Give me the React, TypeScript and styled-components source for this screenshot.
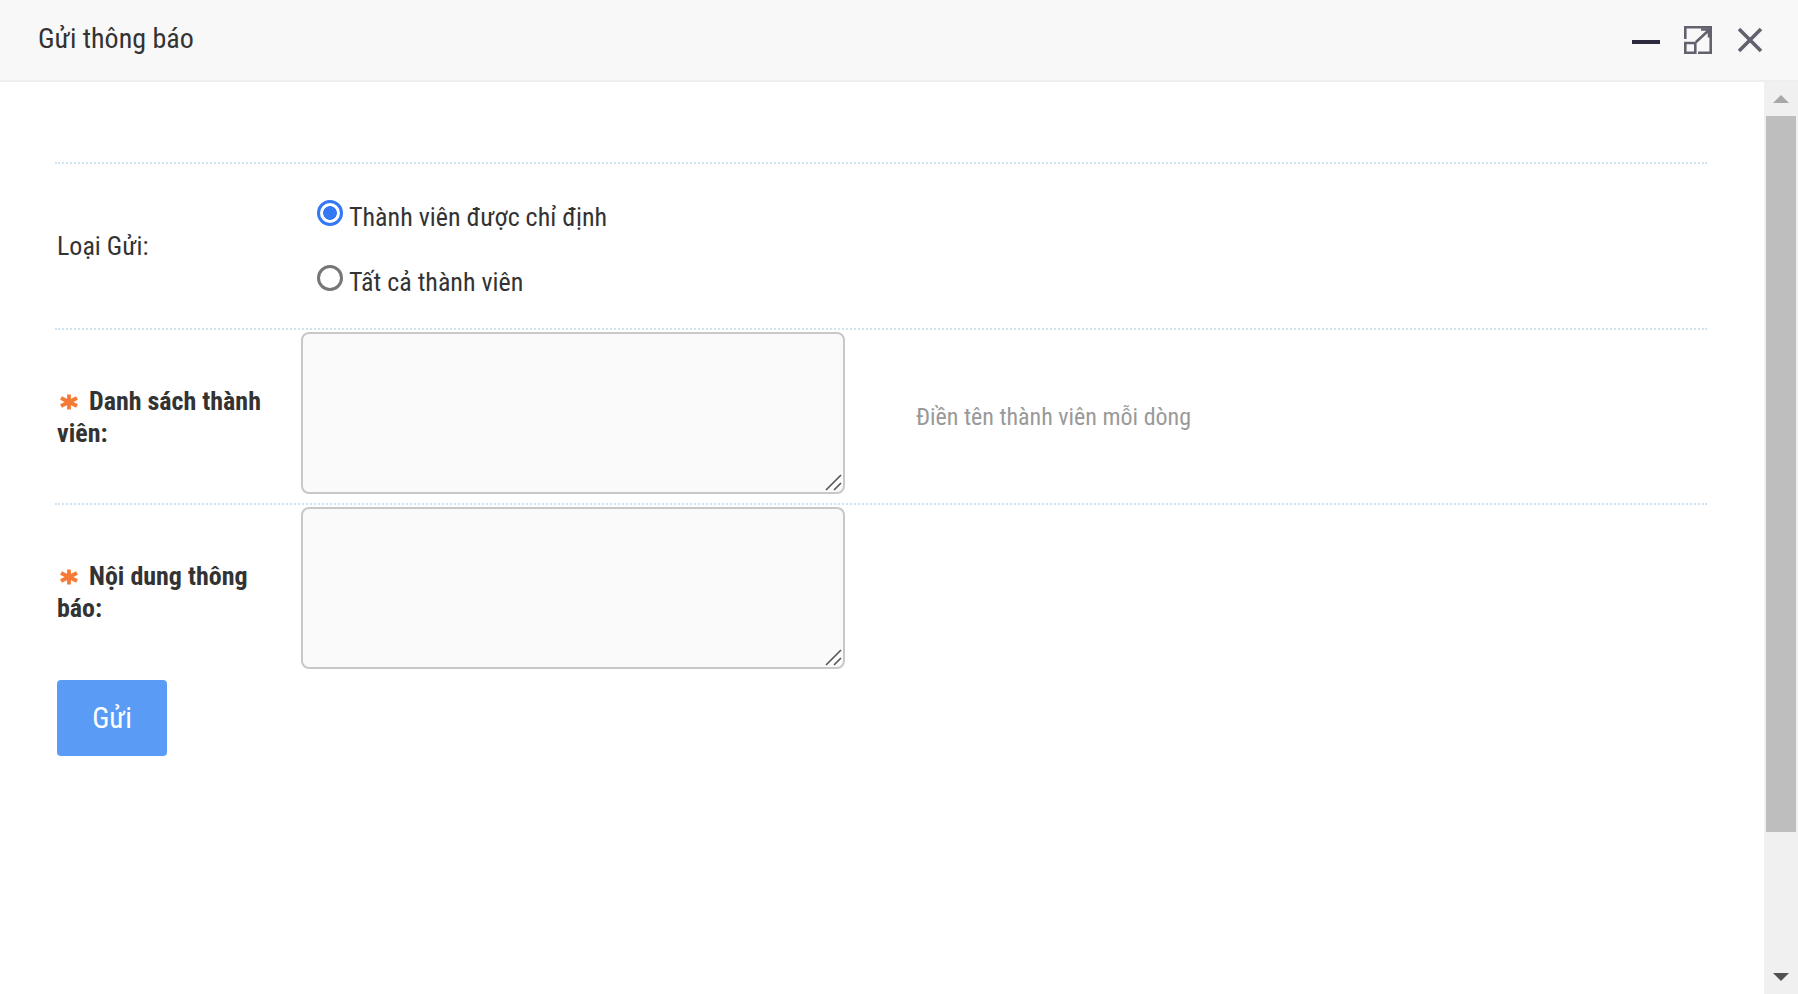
import { FC } from "react";
import styled, { createGlobalStyle } from "styled-components";

const GlobalStyle = createGlobalStyle`
  html, body {
    margin: 0;
    height: 100%;
    overflow: hidden;
    background: #fff;
  }
  #root {
    height: 100%;
  }
`;

const StyledWindow = styled.div`
  display: flex;
  flex-direction: column;
  height: 994px;
  font-family: "Roboto", "Liberation Sans", sans-serif;
  font-stretch: condensed;
  color: #333;
`;
const StyledHeader = styled.header`
  flex: none;
  box-sizing: border-box;
  height: 82px;
  display: flex;
  align-items: center;
  justify-content: space-between;
  padding: 0 34px 0 38px;
  background: #f8f8f8;
  border-bottom: 2px solid #eee;
`;
const StyledTitle = styled.h1`
  margin: 0 0 4px;
  font-size: 28px;
  font-weight: 400;
  color: #333;
`;
const StyledControls = styled.div`
  display: flex;
  align-items: center;
  gap: 24px;
`;
const StyledIconBtn = styled.button`
  width: 28px;
  height: 28px;
  padding: 0;
  border: 0;
  background: none;
  display: block;
`;
const StyledBody = styled.div`
  flex: 1;
  min-height: 0;
  display: flex;
`;
const StyledMain = styled.main`
  flex: 1;
  min-width: 0;
  overflow: hidden;
`;
const StyledScrollbar = styled.div`
  flex: none;
  width: 34px;
  display: flex;
  flex-direction: column;
  background: #f0f0f0;
`;
const StyledScrollBtn = styled.div`
  flex: none;
  height: 34px;
  display: flex;
  align-items: center;
  justify-content: center;
`;
const StyledThumb = styled.div`
  height: 716px;
  margin: 0 2px;
  background: #bebebe;
`;
const StyledTrack = styled.div`
  flex: 1;
`;
const StyledContent = styled.div`
  box-sizing: border-box;
  padding: 80px 57px 0 55px;
`;
const StyledRow = styled.div<{ $height: number }>`
  display: grid;
  grid-template-columns: 246px 544px 1fr;
  align-items: center;
  height: ${({ $height }) => $height}px;
  border-top: 2px dotted #cfe3f0;
  box-sizing: border-box;
`;
const StyledLabel = styled.label<{ $required?: boolean }>`
  padding: 0 26px 0 2px;
  font-size: 26px;
  line-height: 32px;
  font-weight: ${({ $required }) => ($required ? 700 : 400)};
`;
const StyledStar = styled.svg`
  width: 20px;
  height: 20px;
  margin: 0 10px 0 2px;
  vertical-align: -2px;
`;
const StyledRadioGroup = styled.div`
  display: flex;
  flex-direction: column;
  gap: 39px;
  padding: 6px 0 0 16px;
`;
const StyledRadioLine = styled.label`
  display: flex;
  align-items: center;
  gap: 6px;
  font-size: 26px;
  line-height: 26px;
`;
const StyledRadio = styled.input`
  appearance: none;
  box-sizing: border-box;
  width: 26px;
  height: 26px;
  margin: 0;
  border: 3px solid #767676;
  border-radius: 50%;
  background: #fff;
  position: relative;
  top: -4px;

  &:checked {
    border-color: #3478f6;
    background: radial-gradient(circle, #3478f6 0 6.5px, #fff 7.2px);
  }
`;
const StyledField = styled.div`
  position: relative;
  align-self: start;
  width: 544px;
  height: 162px;
  margin-top: 2px;
`;
const StyledTextarea = styled.textarea`
  box-sizing: border-box;
  display: block;
  width: 100%;
  height: 100%;
  margin: 0;
  background: #fafafa;
  border: 2px solid #c8c8c8;
  border-radius: 8px;
  outline: none;
  resize: none;
`;
const StyledGrip = styled.svg`
  position: absolute;
  right: 3px;
  bottom: 3px;
  width: 17px;
  height: 17px;
  pointer-events: none;
`;
const StyledHint = styled.div`
  padding-left: 71px;
  font-size: 24px;
  color: #999;
`;
const StyledButton = styled.button`
  display: block;
  width: 110px;
  height: 76px;
  margin: 2px 0 0 2px;
  border: 0;
  border-radius: 4px;
  background: #5a9bf6;
  color: #fff;
  font-family: inherit;
  font-stretch: inherit;
  font-size: 29px;
`;

const Star: FC = () => (
  <StyledStar viewBox="0 0 20 20" aria-hidden="true">
    <g stroke="#f47a36" strokeWidth="3.8">
      <path d="M10 2.5v15" />
      <path d="M2 6l16 8" />
      <path d="M18 6L2 14" />
    </g>
  </StyledStar>
);

const Memo: FC = () => (
  <StyledField>
    <StyledTextarea />
    <StyledGrip viewBox="0 0 17 17" aria-hidden="true">
      <path d="M1 16L16 1M9 16l7-7" stroke="#555" strokeWidth="1.6" fill="none" />
    </StyledGrip>
  </StyledField>
);

const App: FC = () => (
  <>
    <GlobalStyle />
    <StyledWindow>
      <StyledHeader>
        <StyledTitle>Gửi thông báo</StyledTitle>
        <StyledControls>
          <StyledIconBtn aria-label="minimize">
            <svg width="28" height="28" viewBox="0 0 28 28">
              <path d="M0 14h28v4H0z" fill="#2b2b3d" />
            </svg>
          </StyledIconBtn>
          <StyledIconBtn aria-label="maximize">
            <svg width="28" height="28" viewBox="0 0 28 28" fill="none" stroke="#62626e" strokeWidth="2.6">
              <path d="M1.3 13V1.3h25.4v25.4H14" />
              <path d="M1.3 17h10v9.7h-10zM12 16L25 4M17 3.5h8v8" />
            </svg>
          </StyledIconBtn>
          <StyledIconBtn aria-label="close">
            <svg width="28" height="28" viewBox="0 0 28 28" fill="none" stroke="#62626e" strokeWidth="3.6">
              <path d="M3 3l22 22M25 3L3 25" />
            </svg>
          </StyledIconBtn>
        </StyledControls>
      </StyledHeader>
      <StyledBody>
        <StyledMain>
          <StyledContent>
            <StyledRow $height={166}>
              <StyledLabel>Loại Gửi:</StyledLabel>
              <StyledRadioGroup>
                <StyledRadioLine>
                  <StyledRadio type="radio" name="type" defaultChecked />
                  Thành viên được chỉ định
                </StyledRadioLine>
                <StyledRadioLine>
                  <StyledRadio type="radio" name="type" />
                  Tất cả thành viên
                </StyledRadioLine>
              </StyledRadioGroup>
            </StyledRow>
            <StyledRow $height={175}>
              <StyledLabel $required>
                <Star />
                Danh sách thành viên:
              </StyledLabel>
              <Memo />
              <StyledHint>Điền tên thành viên mỗi dòng</StyledHint>
            </StyledRow>
            <StyledRow $height={175}>
              <StyledLabel $required>
                <Star />
                Nội dung thông báo:
              </StyledLabel>
              <Memo />
            </StyledRow>
            <StyledButton>Gửi</StyledButton>
          </StyledContent>
        </StyledMain>
        <StyledScrollbar>
          <StyledScrollBtn>
            <svg width="16" height="8" viewBox="0 0 16 8">
              <path d="M8 0l8 8H0z" fill="#a8a8a8" />
            </svg>
          </StyledScrollBtn>
          <StyledThumb />
          <StyledTrack />
          <StyledScrollBtn>
            <svg width="16" height="8" viewBox="0 0 16 8">
              <path d="M0 0h16L8 8z" fill="#505050" />
            </svg>
          </StyledScrollBtn>
        </StyledScrollbar>
      </StyledBody>
    </StyledWindow>
  </>
);

export default App;
